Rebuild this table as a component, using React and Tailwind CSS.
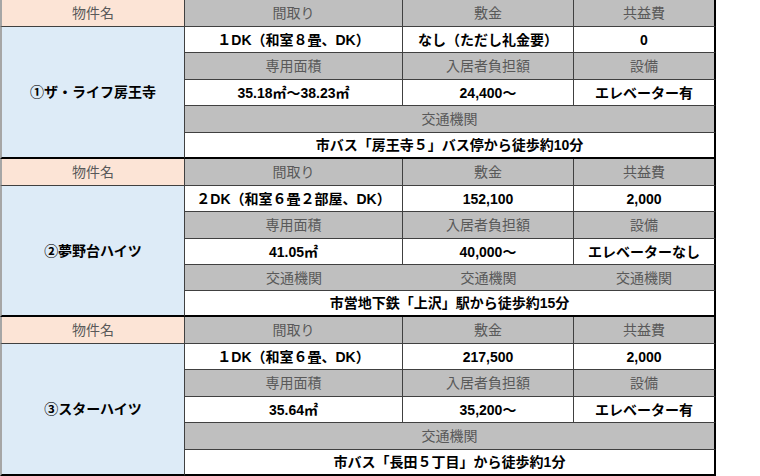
const font = { fontFamily: '"Liberation Sans", "Noto Sans CJK JP", sans-serif' };

const blocks = [
  {
    rows: "grid-rows-[27px_26px_27px_26px_27px_26px]",
    name: "①ザ・ライフ房王寺",
    layout: "１DK（和室８畳、DK）",
    deposit: "なし（ただし礼金要）",
    fee: "0",
    area: "35.18㎡～38.23㎡",
    burden: "24,400～",
    equip: "エレベーター有",
    access: "市バス「房王寺５」バス停から徒歩約10分",
    split: false,
  },
  {
    rows: "grid-rows-[27px_26px_27px_26px_26px_26px]",
    name: "②夢野台ハイツ",
    layout: "２DK（和室６畳２部屋、DK）",
    deposit: "152,100",
    fee: "2,000",
    area: "41.05㎡",
    burden: "40,000～",
    equip: "エレベーターなし",
    access: "市営地下鉄「上沢」駅から徒歩約15分",
    split: true,
  },
  {
    rows: "grid-rows-[27px_26px_27px_26px_27px_26px]",
    name: "③スターハイツ",
    layout: "１DK（和室６畳、DK）",
    deposit: "217,500",
    fee: "2,000",
    area: "35.64㎡",
    burden: "35,200～",
    equip: "エレベーター有",
    access: "市バス「長田５丁目」から徒歩約1分",
    split: false,
  },
];

const head = "flex items-center justify-center bg-[#bfbfbf] text-[#595959] border-r border-b border-[#404040]";
const val = "flex items-center justify-center bg-white text-black font-bold border-r border-b border-[#404040] whitespace-nowrap";

function Block({ b }) {
  return (
    <div className={`grid grid-cols-[185px_218px_171px_142px] ${b.rows} text-[14px] leading-none`}>
      <div className="flex items-center justify-center bg-[#fce4d6] text-[#595959] border-l-2 border-l-[#a6a6a6] border-r border-b border-[#404040]">物件名</div>
      <div className={head}>間取り</div>
      <div className={head}>敷金</div>
      <div className={`${head} border-r-2 border-r-black`}>共益費</div>

      <div className="row-span-5 flex items-center justify-center bg-[#ddebf7] font-bold text-black border-l-2 border-l-[#a6a6a6] border-r border-r-[#404040] border-b-2 border-b-black">
        {b.name}
      </div>
      <div className={val}>{b.layout}</div>
      <div className={val}>{b.deposit}</div>
      <div className={`${val} border-r-2 border-r-black`}>{b.fee}</div>

      <div className={head}>専用面積</div>
      <div className={head}>入居者負担額</div>
      <div className={`${head} border-r-2 border-r-black`}>設備</div>

      <div className={val}>{b.area}</div>
      <div className={val}>{b.burden}</div>
      <div className={`${val} border-r-2 border-r-black`}>{b.equip}</div>

      {b.split ? (
        <div className="col-span-3 grid grid-cols-[218px_171px_1fr] bg-[#bfbfbf] text-[#595959] border-b border-[#404040] border-r-2 border-r-black">
          <div className="flex items-center justify-center">交通機関</div>
          <div className="flex items-center justify-center">交通機関</div>
          <div className="flex items-center justify-center">交通機関</div>
        </div>
      ) : (
        <div className={`${head} col-span-3 border-r-2 border-r-black`}>交通機関</div>
      )}

      <div className="col-span-3 flex items-center justify-center bg-white text-black font-bold border-r-2 border-r-black border-b-2 border-b-black">
        {b.access}
      </div>
    </div>
  );
}

export default function App() {
  return (
    <div className="w-[760px] h-[476px] bg-white overflow-hidden" style={font}>
      {blocks.map((b, i) => (
        <Block key={i} b={b} />
      ))}
    </div>
  );
}
